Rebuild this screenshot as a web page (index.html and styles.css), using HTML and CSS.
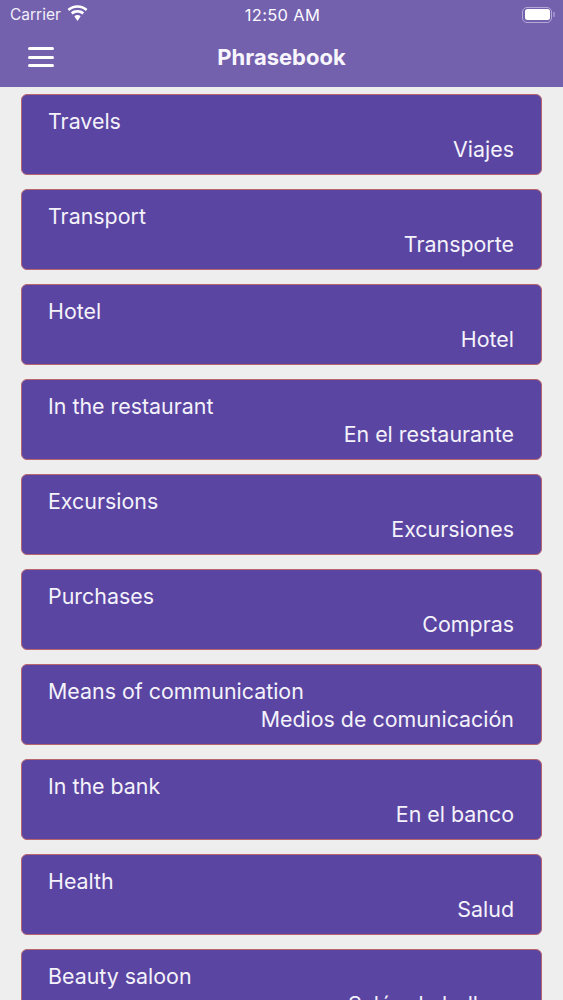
FILE: index.html
```html
<!DOCTYPE html>
<html lang="en">
<head>
<meta charset="utf-8">
<title>Phrasebook</title>
<link rel="stylesheet" href="styles.css">
</head>
<body>
<div class="screen">
  <header class="header">
    <div class="status">
      <div class="status-left">
        <span class="carrier">Carrier</span>
        <svg class="wifi" viewBox="0 0 20 15" width="21" height="16"><path d="M10 2.600c3 0 5.700 1.100 7.800 3l1.700-1.900C17 1.400 13.700 0 10 0S3 1.400.5 3.700l1.700 1.900c2.100-1.900 4.800-3 7.800-3z" fill="#fff"/><path d="M10 7.200c1.700 0 3.300.6 4.600 1.700l1.700-1.900C14.600 5.500 12.400 4.700 10 4.700s-4.600.8-6.300 2.300l1.700 1.900C6.700 7.800 8.300 7.200 10 7.200z" fill="#fff"/><path d="M10 9.400c-1.100 0-2.200.4-3 1.100l3 4.500 3-4.500c-.8-.7-1.900-1.100-3-1.100z" fill="#fff"/></svg>
      </div>
      <span class="clock">12:50 AM</span>
      <div class="battery"><span class="battery-body"><span class="battery-fill"></span></span><span class="battery-cap"></span></div>
    </div>
    <div class="navbar">
      <button class="menu" aria-label="Menu"><span></span><span></span><span></span></button>
      <h1 class="title">Phrasebook</h1>
    </div>
  </header>
  <main class="list">
    <a class="card"><span class="en">Travels</span><span class="es">Viajes</span></a>
    <a class="card"><span class="en">Transport</span><span class="es">Transporte</span></a>
    <a class="card"><span class="en">Hotel</span><span class="es">Hotel</span></a>
    <a class="card"><span class="en">In the restaurant</span><span class="es">En el restaurante</span></a>
    <a class="card"><span class="en">Excursions</span><span class="es">Excursiones</span></a>
    <a class="card"><span class="en">Purchases</span><span class="es">Compras</span></a>
    <a class="card"><span class="en">Means of communication</span><span class="es">Medios de comunicación</span></a>
    <a class="card"><span class="en">In the bank</span><span class="es">En el banco</span></a>
    <a class="card"><span class="en">Health</span><span class="es">Salud</span></a>
    <a class="card"><span class="en">Beauty saloon</span><span class="es">Salón de belleza</span></a>
  </main>
</div>
</body>
</html>
```
FILE: styles.css
```css
* { box-sizing: border-box; }
html, body { margin: 0; padding: 0; }
body { font-family: Inter, "Noto Sans", sans-serif; background: #eeeeee; color: #fff; }
.screen { width: 563px; height: 1000px; overflow: hidden; display: flex; flex-direction: column; }
.header { height: 87px; flex: none; background: #7461ae; }
.status { height: 29px; display: grid; grid-template-columns: 1fr auto 1fr; align-items: center; padding: 0 8px 0 10px; }
.status-left { display: flex; align-items: center; gap: 6px; }
.carrier { font-size: 15.500px; color: #f1eff8; }
.wifi { margin-top: -3px; }
.clock { font-size: 16.500px; font-weight: 400; letter-spacing: .3px; color: #fbfaff; }
.battery { justify-self: end; display: flex; align-items: center; gap: 1px; }
.battery-body { width: 30px; height: 16px; border: 1.500px solid #b3a8d6; border-radius: 5px; padding: 1.500px; display: block; }
.battery-fill { display: block; width: 100%; height: 100%; background: #fff; border-radius: 2.500px; }
.battery-cap { width: 2px; height: 5px; background: #9d90c9; border-radius: 0 1px 1px 0; }
.navbar { height: 58px; display: flex; align-items: center; justify-content: center; position: relative; }
.menu { position: absolute; left: 28px; top: 18px; width: 26px; height: 20px; padding: 0; border: 0; background: none; display: flex; flex-direction: column; justify-content: space-between; }
.menu span { display: block; height: 3px; background: #fff; border-radius: 1.500px; }
.title { margin: 0 0 3px; font-size: 22px; font-weight: 700; color: #f8f6fc; }
.list { flex: none; display: flex; flex-direction: column; gap: 14px; padding: 7px 21px 0; }
.card { flex: none; height: 81px; padding: 12px 27px 0 26px; background: #5a45a2; border: 1px solid #b9656e; border-radius: 6px; display: flex; flex-direction: column; font-size: 21.400px; font-weight: 400; line-height: 28px; color: #f4f2fa; }
.es { text-align: right; }
```
